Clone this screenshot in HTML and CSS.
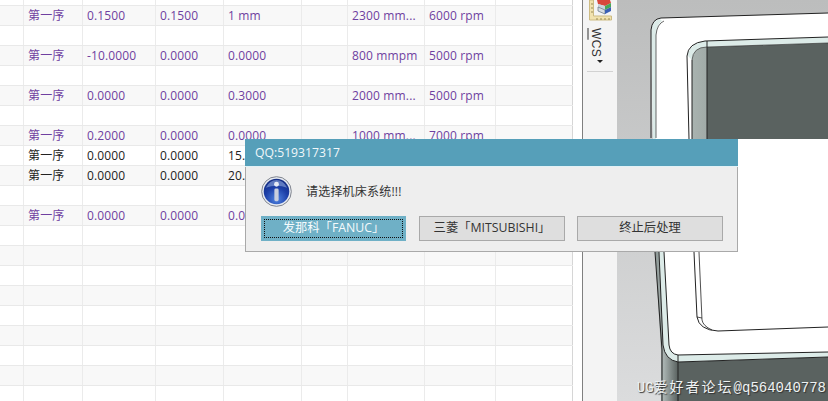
FILE: index.html
```html
<!DOCTYPE html>
<html lang="zh">
<head>
<meta charset="utf-8">
<title>QQ:519317317</title>
<link rel="stylesheet" href="styles.css">
</head>
<body>
<div class="app">
  <section class="sheet">
    <div class="row stub"><i></i><i></i><i></i><i></i><i></i><i></i><i></i><i></i><i></i></div>
    <div class="row odd purple"><i></i><i>第一序</i><i>0.1500</i><i>0.1500</i><i>1 mm</i><i></i><i>2300 mm...</i><i>6000 rpm</i><i></i></div>
    <div class="row"><i></i><i></i><i></i><i></i><i></i><i></i><i></i><i></i><i></i></div>
    <div class="row odd purple"><i></i><i>第一序</i><i>-10.0000</i><i>0.0000</i><i>0.0000</i><i></i><i>800 mmpm</i><i>5000 rpm</i><i></i></div>
    <div class="row"><i></i><i></i><i></i><i></i><i></i><i></i><i></i><i></i><i></i></div>
    <div class="row odd purple"><i></i><i>第一序</i><i>0.0000</i><i>0.0000</i><i>0.3000</i><i></i><i>2000 mm...</i><i>5000 rpm</i><i></i></div>
    <div class="row"><i></i><i></i><i></i><i></i><i></i><i></i><i></i><i></i><i></i></div>
    <div class="row odd purple"><i></i><i>第一序</i><i>0.2000</i><i>0.0000</i><i>0.0000</i><i></i><i>1000 mm...</i><i>7000 rpm</i><i></i></div>
    <div class="row"><i></i><i>第一序</i><i>0.0000</i><i>0.0000</i><i>15.</i><i></i><i></i><i></i><i></i></div>
    <div class="row odd"><i></i><i>第一序</i><i>0.0000</i><i>0.0000</i><i>20.</i><i></i><i></i><i></i><i></i></div>
    <div class="row"><i></i><i></i><i></i><i></i><i></i><i></i><i></i><i></i><i></i></div>
    <div class="row odd purple"><i></i><i>第一序</i><i>0.0000</i><i>0.0000</i><i>0.0</i><i></i><i></i><i></i><i></i></div>
    <div class="row"><i></i><i></i><i></i><i></i><i></i><i></i><i></i><i></i><i></i></div>
    <div class="row odd"><i></i><i></i><i></i><i></i><i></i><i></i><i></i><i></i><i></i></div>
    <div class="row"><i></i><i></i><i></i><i></i><i></i><i></i><i></i><i></i><i></i></div>
    <div class="row odd"><i></i><i></i><i></i><i></i><i></i><i></i><i></i><i></i><i></i></div>
    <div class="row"><i></i><i></i><i></i><i></i><i></i><i></i><i></i><i></i><i></i></div>
    <div class="row odd"><i></i><i></i><i></i><i></i><i></i><i></i><i></i><i></i><i></i></div>
    <div class="row"><i></i><i></i><i></i><i></i><i></i><i></i><i></i><i></i><i></i></div>
    <div class="row odd"><i></i><i></i><i></i><i></i><i></i><i></i><i></i><i></i><i></i></div>
    <div class="row last"><i></i><i></i><i></i><i></i><i></i><i></i><i></i><i></i><i></i></div>
  </section>

  <div class="gutter"></div>

  <aside class="toolbar">
    <svg class="tool-icon" width="23" height="21" viewBox="0 0 23 21">
      <path d="M.5 0h4v16h18v4H.5z" fill="#f1e2ae" stroke="#cdbb82"/>
      <path d="M2 4h2M2 8h2M2 12h2M8 18v2M12 18v2M16 18v2M20 18v2" stroke="#9a8a55"/>
      <path d="M8 0h13l1 3-6 3-7-2z" fill="#d8473b"/>
      <path d="M9 4l7 2v4l-7-3z" fill="#c9d3dc"/>
      <path d="M16 6l6-3v4l-6 3z" fill="#49a657"/>
      <path d="M9 7l7 3v4l-7-3z" fill="#d7dde2" stroke="#5f7080" stroke-width=".7"/>
      <path d="M16 10l6-3v4l-6 3z" fill="#3a5fb5"/>
    </svg>
    <span class="wcs"><u>W</u>CS</span>
    <span class="caret"></span>
    <span class="tool-sep"></span>
  </aside>

  <main class="viewport">
    <svg class="model" viewBox="617 0 211 401" width="211" height="401">
      <defs>
        <linearGradient id="bg" x1="0" y1="0" x2="0" y2="1">
          <stop offset="0" stop-color="#bcbdbd"/>
          <stop offset="1" stop-color="#dbdcdd"/>
        </linearGradient>
        <linearGradient id="side" x1="0" y1="0" x2="1" y2="0">
          <stop offset="0" stop-color="#a9b3b0"/>
          <stop offset="1" stop-color="#59615f"/>
        </linearGradient>
        <linearGradient id="sideLow" x1="0" y1="0" x2="1" y2="0">
          <stop offset="0" stop-color="#7f8a88"/>
          <stop offset="0.45" stop-color="#a9b3b1"/>
          <stop offset="1" stop-color="#59615f"/>
        </linearGradient>
      </defs>
      <rect x="617" y="0" width="211" height="401" fill="url(#bg)"/>
      <path d="M651 30Q652 19 661 18L828 13V358H670L657 252L653 140z" fill="#fff"/>
      <path d="M652 140L655 250L661 350L661 401H678V360L664 345L659 250L653 140z" fill="url(#sideLow)"/>
      <path d="M678 362L828 357V401H678z" fill="#5a6260"/>
      <path d="M651 32L653 140L659 250L663 345Q665 360 678 362L828 357V352L678 355Q670 354 669 345L664 250L656 140V35Q657 24 662 21L660 19Q652 20 651 32z" fill="#dcebe8"/>
      <path d="M651 138V30Q652 19 661 18L828 13" fill="none" stroke="#222"/>
      <path d="M656 138V35Q657 24 664 21" fill="none" stroke="#444" stroke-width=".8"/>
      <path d="M655 252L662 350V401" fill="none" stroke="#222"/>
      <path d="M659 252L663 345Q665 360 678 362L828 357" fill="none" stroke="#222"/>
      <path d="M664 252L669 345Q670 354 678 355L828 352" fill="none" stroke="#222"/>
      <path d="M678 355V401" fill="none" stroke="#222"/>
      <path d="M692 60Q693 47 707 47L828 43V139H692z" fill="url(#side)"/>
      <path d="M707 47L828 43V139H707z" fill="#5a6260"/>
      <path d="M692 60Q693 47 707 47L828 43V37L705 41Q692 42 687 55z" fill="#dcebe8"/>
      <path d="M687 56Q688 43 705 41L828 37" fill="none" stroke="#222"/>
      <path d="M687 56L689 139M692 60V139M707 41V139" fill="none" stroke="#222"/>
      <path d="M692 60Q693 47 707 47L828 43" fill="none" stroke="#333" stroke-width=".7"/>
      <path d="M694 252L697 317Q699 330 718 331L828 327" fill="none" stroke="#222"/>
      <path d="M699 252L702 320Q703 326 712 330M697 317L702 318" fill="none" stroke="#222" stroke-width=".8"/>
    </svg>
  </main>

  <div class="dialog">
    <header class="dialog-title">QQ:519317317</header>
    <div class="dialog-message">
      <svg class="info" width="31" height="31" viewBox="0 0 32 32">
        <defs>
          <radialGradient id="orb" cx="0.5" cy="0.8" r="0.75">
            <stop offset="0" stop-color="#4f83e0"/>
            <stop offset="0.6" stop-color="#1c3fa8"/>
            <stop offset="1" stop-color="#162f86"/>
          </radialGradient>
        </defs>
        <circle cx="16" cy="16" r="15.3" fill="#e8ecf2" stroke="#7d818b"/>
        <circle cx="16" cy="16" r="13.2" fill="url(#orb)"/>
        <path d="M5 12Q9 4 16 4Q23 4 27 12Q16 8 5 12z" fill="#8ea8e0" opacity=".6"/>
        <circle cx="16" cy="8.5" r="2.5" fill="#e6ebf5"/>
        <rect x="13.8" y="13" width="4.4" height="13" rx="1.5" fill="#c9cfdd"/>
      </svg>
      <span class="message-text">请选择机床系统!!!</span>
    </div>
    <div class="dialog-actions">
      <button class="btn btn-primary"><span>发那科「FANUC」</span></button>
      <button class="btn">三菱「MITSUBISHI」</button>
      <button class="btn">终止后处理</button>
    </div>
  </div>

  <div class="watermark">UG<span class="wm-cjk">爱好者论坛</span>@q564040778</div>
</div>
</body>
</html>
```

FILE: styles.css
```css
* { box-sizing: border-box; }
html, body { margin: 0; padding: 0; }
body {
  width: 828px;
  height: 401px;
  overflow: hidden;
  background: #fff;
  font-family: "Open Sans", "Noto Sans CJK SC", sans-serif;
  font-size: 12px;
}
.app {
  position: relative;
  display: flex;
  width: 828px;
  height: 401px;
  overflow: hidden;
}

/* Table */
.sheet {
  width: 573px;
  height: 401px;
  overflow: hidden;
  flex: none;
  color: #222;
}
.row {
  display: grid;
  grid-template-columns: 24px 59px 73px 68px 78px 46px 77px 71px 77px;
  height: 20px;
  border-bottom: 1px solid #e9e9e9;
  background: #fff;
  letter-spacing: 0.15px;
}
.row.stub { height: 6px; }
.row.last { height: 16px; border-bottom: 0; }
.row.odd { background: #f8f8f8; }
.row.purple { color: #6f3fa0; }
.row i {
  display: block;
  font-style: normal;
  padding-left: 4px;
  line-height: 19px;
  white-space: nowrap;
  overflow: hidden;
  border-right: 1px solid #ebebeb;
}
.row i:last-child { border-right-color: #d6d6d6; }

.gutter {
  width: 10px;
  flex: none;
  background: #fff;
  border-right: 1px solid #7f7f7f;
}

/* Toolbar */
.toolbar {
  width: 34px;
  flex: none;
  background: #f4f4f4;
  display: flex;
  flex-direction: column;
  align-items: center;
}
.tool-icon { flex: none; }
.wcs {
  writing-mode: vertical-rl;
  margin-top: 7px;
  margin-right: 9px;
  font-family: "Liberation Sans", sans-serif;
  font-size: 12px;
  line-height: 12px;
  letter-spacing: 0.4px;
  color: #333;
}
.caret {
  margin-top: 3px;
  width: 0;
  height: 0;
  border-left: 3px solid transparent;
  border-right: 3px solid transparent;
  border-top: 3px solid #222;
}
.tool-sep {
  margin-top: 8px;
  width: 26px;
  height: 1px;
  background: #d2d2d2;
}

/* Viewport */
.viewport { flex: 1; min-width: 0; }
.model { display: block; }

/* Dialog */
.dialog {
  position: absolute;
  left: 245px;
  top: 139px;
  width: 493px;
  height: 113px;
  background: #eeeeee;
  border: 1px solid #a9a9a9;
  border-top: 0;
  display: flex;
  flex-direction: column;
}
.dialog-title {
  height: 28px;
  margin: 0 -1px;
  padding-left: 10px;
  background: #569fb9;
  border-bottom: 1px solid #e2f1f5;
  color: #f2f8fa;
  font-size: 12.2px;
  line-height: 27px;
}
.dialog-message {
  display: flex;
  align-items: center;
  height: 49px;
  padding-left: 15px;
  padding-bottom: 1px;
}
.info { flex: none; }
.message-text {
  margin-left: 14px;
  color: #333;
  font-size: 12px;
  letter-spacing: 0.2px;
}
.dialog-actions {
  display: flex;
  gap: 12px;
  padding-left: 15px;
}
.btn {
  width: 146px;
  height: 25px;
  padding: 0;
  background: #dedede;
  border: 1px solid #a9a9a9;
  color: #333;
  font-family: inherit;
  font-size: 12.3px;
  line-height: 1;
}
.btn-primary {
  width: 145px;
  margin-right: 1px;
  padding: 2px;
  background: #6fb0c6;
  border-color: #6fb0c6;
  color: #f4fafc;
}
.btn-primary span {
  display: flex;
  align-items: center;
  justify-content: center;
  height: 100%;
  border: 1px dotted #111;
}

/* Watermark */
.watermark {
  position: absolute;
  right: 2px;
  top: 379px;
  white-space: nowrap;
  font-family: "Liberation Mono", "Noto Sans CJK SC", monospace;
  font-size: 14px;
  line-height: 18px;
  color: #eef2f2;
  text-shadow: 1px 1px 1px #333;
}
.wm-cjk { letter-spacing: 2px; }
```
